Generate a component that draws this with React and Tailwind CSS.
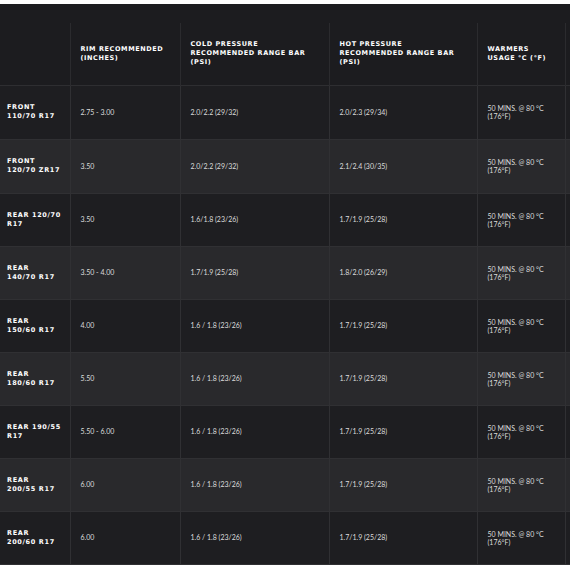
import React from 'react';

const rows = [
  { tyre: ['FRONT', '110/70 R17'], rim: '2.75 - 3.00', cold: '2.0/2.2 (29/32)', hot: '2.0/2.3 (29/34)' },
  { tyre: ['FRONT', '120/70 ZR17'], rim: '3.50', cold: '2.0/2.2 (29/32)', hot: '2.1/2.4 (30/35)' },
  { tyre: ['REAR 120/70', 'R17'], rim: '3.50', cold: '1.6/1.8 (23/26)', hot: '1.7/1.9 (25/28)' },
  { tyre: ['REAR', '140/70 R17'], rim: '3.50 - 4.00', cold: '1.7/1.9 (25/28)', hot: '1.8/2.0 (26/29)' },
  { tyre: ['REAR', '150/60 R17'], rim: '4.00', cold: '1.6 / 1.8 (23/26)', hot: '1.7/1.9 (25/28)' },
  { tyre: ['REAR', '180/60 R17'], rim: '5.50', cold: '1.6 / 1.8 (23/26)', hot: '1.7/1.9 (25/28)' },
  { tyre: ['REAR 190/55', 'R17'], rim: '5.50 - 6.00', cold: '1.6 / 1.8 (23/26)', hot: '1.7/1.9 (25/28)' },
  { tyre: ['REAR', '200/55 R17'], rim: '6.00', cold: '1.6 / 1.8 (23/26)', hot: '1.7/1.9 (25/28)' },
  { tyre: ['REAR', '200/60 R17'], rim: '6.00', cold: '1.6 / 1.8 (23/26)', hot: '1.7/1.9 (25/28)' },
];

// row heights add up to the 479px body of the table
const heights = ['h-[54px]', 'h-[54px]', 'h-[53px]', 'h-[53px]', 'h-[53px]', 'h-[53px]', 'h-[53px]', 'h-[53px]', 'h-[53px]'];

const headFont = { fontFamily: '"DejaVu Sans", sans-serif' };

const HeadCell = ({ lines }) => (
  <th className="border-l border-[#2b2b2e] px-[10px] text-left align-middle font-bold text-[6.5px] leading-[9px] tracking-[0.09em] text-white" style={headFont}>
    {lines.map((l) => (
      <div key={l}>{l}</div>
    ))}
  </th>
);

export default function App() {
  return (
    <div className="w-[570px] h-[570px] bg-white pt-[4px] overflow-hidden">
      <div className="w-[600px] bg-[#1c1c1f]">
        <div className="h-[19px]" />
        <table className="w-[600px] border-collapse table-fixed font-['Lato',sans-serif]">
          <colgroup>
            <col className="w-[70px]" />
            <col className="w-[110px]" />
            <col className="w-[149px]" />
            <col className="w-[148px]" />
            <col className="w-[88px]" />
            <col className="w-[35px]" />
          </colgroup>
          <thead>
            <tr className="h-[62px] border-b border-[#2e2e31]">
              <th className="border-l-0" />
              <HeadCell lines={['RIM RECOMMENDED', '(INCHES)']} />
              <HeadCell lines={['COLD PRESSURE', 'RECOMMENDED RANGE BAR', '(PSI)']} />
              <HeadCell lines={['HOT PRESSURE', 'RECOMMENDED RANGE BAR', '(PSI)']} />
              <HeadCell lines={['WARMERS', 'USAGE °C (°F)']} />
              <th className="border-l border-[#2b2b2e]" />
            </tr>
          </thead>
          <tbody>
            {rows.map((r, i) => (
              <tr
                key={i}
                className={`${heights[i]} border-b border-[#303033] ${i % 2 === 1 ? 'bg-[#29292c]' : 'bg-[#1e1e21]'}`}
              >
                <td className="pl-[7px] align-middle font-bold text-[6.5px] leading-[9px] tracking-[0.1em] text-white" style={headFont}>
                  <div>{r.tyre[0]}</div>
                  <div>{r.tyre[1]}</div>
                </td>
                <td className="border-l border-[#303033] px-[10px] align-middle text-[7px] text-[#dcdcdc]">{r.rim}</td>
                <td className="border-l border-[#303033] px-[10px] align-middle text-[7px] text-[#dcdcdc]">{r.cold}</td>
                <td className="border-l border-[#303033] px-[10px] align-middle text-[7px] text-[#dcdcdc]">{r.hot}</td>
                <td className="border-l border-[#303033] px-[10px] align-middle text-[7px] leading-[8px] text-[#dcdcdc]">
                  <div>50 MINS. @ 80 °C</div>
                  <div>(176°F)</div>
                </td>
                <td className="border-l border-[#303033]" />
              </tr>
            ))}
          </tbody>
        </table>
      </div>
    </div>
  );
}
